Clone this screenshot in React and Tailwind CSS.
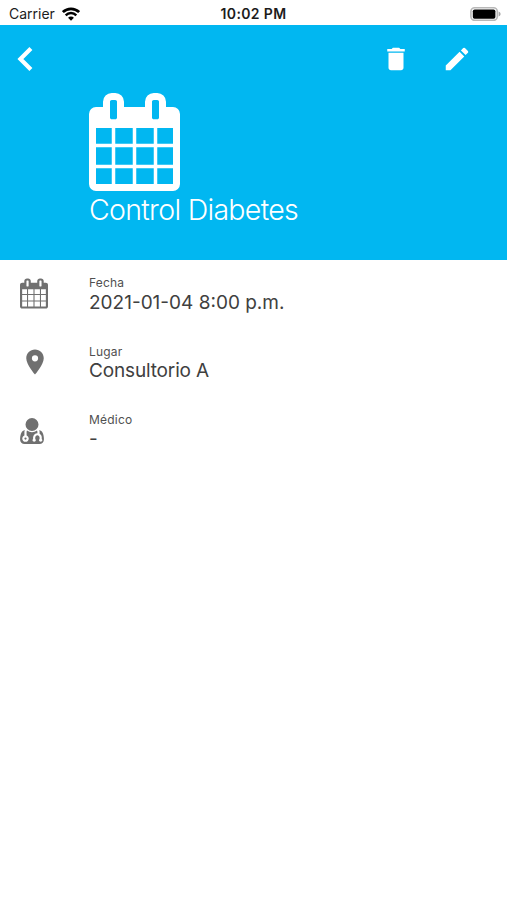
import React from "react";
import { MdDelete, MdEdit, MdPlace } from "react-icons/md";

const WifiIcon = () => (
    <svg viewBox="0 0 18 14" className="w-[18px] h-[14px]" fill="none" stroke="#000">
        <path d="M0.9 5.1a11.6 11.6 0 0 1 16.2 0" strokeWidth="2.7" />
        <path d="M3.700 8.300a7.4 7.4 0 0 1 10.600 0" strokeWidth="2.4" />
        <path d="M9 13.700L6.100 10.800a4 4 0 0 1 5.800 0z" fill="#000" stroke="none" />
    </svg>
);

const BatteryIcon = () => (
    <svg viewBox="0 0 31 14" className="w-[31px] h-[14px]">
        <rect x="0.9" y="0.8" width="26.4" height="12.6" rx="3.8" fill="#fff" stroke="#b8b8b8" strokeWidth="1.6" />
        <rect x="2.8" y="2.4" width="22.6" height="9.4" rx="1.8" fill="#000" />
        <path d="M28.6 4.6c1.3.4 2 1.4 2 2.5s-.7 2.1-2 2.5z" fill="#a8a8a8" />
    </svg>
);

const CalendarIcon = ({ className }) => (
    <svg viewBox="0 0 1664 1792" className={className} fill="currentColor">
        <path
            fillRule="evenodd"
            d="M128 1664h288v-288h-288zM480 1664h320v-288h-320zM864 1664h320v-288h-320zM1248 1664h288v-288h-288zM128 1312h288v-320h-288zM480 1312h320v-320h-320zM864 1312h320v-320h-320zM1248 1312h288v-320h-288zM128 928h288v-288h-288zM480 928h320v-288h-320zM864 928h320v-288h-320zM1248 928h288v-288h-288zM512 448v-288q0-13-9.500-22.500t-22.500-9.500h-64q-13 0-22.500 9.500t-9.500 22.500v288q0 13 9.500 22.500t22.500 9.500h64q13 0 22.500-9.500t9.500-22.500zM1280 448v-288q0-13-9.500-22.500t-22.500-9.500h-64q-13 0-22.500 9.500t-9.500 22.500v288q0 13 9.500 22.500t22.500 9.500h64q13 0 22.500-9.500t9.500-22.500zM1664 384v1280q0 52-38 90t-90 38h-1408q-52 0-90-38t-38-90v-1280q0-52 38-90t90-38h128v-96q0-66 47-113t113-47h64q66 0 113 47t47 113v96h384v-96q0-66 47-113t113-47h64q66 0 113 47t47 113v96h128q52 0 90 38t38 90z"
        />
    </svg>
);

const DoctorIcon = ({ className }) => (
    <svg viewBox="0 0 1408 1536" className={className} fill="currentColor">
        <g transform="translate(0 1408) scale(1 -1)">
            <path d="M384 192q0 -26 -19 -45t-45 -19t-45 19t-19 45t19 45t45 19t45 -19t19 -45zM1408 131q0 -121 -73 -190t-194 -69h-874q-121 0 -194 69t-73 190q0 68 5.500 131t24 138t47.500 132.500t81 103t120 60.500q-22 -52 -22 -120v-203q-58 -20 -93 -70t-35 -111q0 -80 56 -136t136 -56t136 56t56 136q0 61 -35.500 111t-92.500 70v203q0 62 25 93q132 -104 295 -104t295 104q25 -31 25 -93v-64q-106 0 -181 -75t-75 -181v-89q-32 -29 -32 -71q0 -40 28 -68t68 -28t68 28t28 68q0 42 -32 71v89q0 52 38 90t90 38t90 -38t38 -90v-89q-32 -29 -32 -71q0 -40 28 -68t68 -28t68 28t28 68q0 42 -32 71v89q0 68 -34.500 127.500t-93.500 93.500q0 10 0.500 42.500t0 48t-2.500 41.500t-7 47t-13 40q68 -15 120 -60.500t81 -103t47.500 -132.500t24 -138t5.500 -131zM1088 1024q0 -159 -112.500 -271.500t-271.500 -112.500t-271.500 112.500t-112.500 271.500t112.500 271.500t271.500 112.500t271.500 -112.500t112.500 -271.500z" />
        </g>
    </svg>
);

const DetailRow = ({ icon, label, value, valueClass = "" }) => (
    <div className="flex h-[68.5px]">
        <div className="w-[89px] shrink-0 pl-5 pt-[3px]">{icon}</div>
        <div>
            <div className="text-[12px] leading-[15px] tracking-[0.2px] text-[#505050]">{label}</div>
            <div className={`text-[19px] leading-[23px] text-[#404040] whitespace-nowrap ${valueClass}`}>{value}</div>
        </div>
    </div>
);

const App = () => {
    return (
        <div className="w-[507px] h-[900px] bg-white overflow-hidden font-['Inter','Liberation_Sans',sans-serif]">

            {/* STATUS BAR */}
            <div className="grid grid-cols-3 items-center h-[25px] pt-[2px] text-[14px] text-[#1c1c1c]">
                <div className="flex items-center gap-[6px] pl-[9px]">
                    <span className="w-[47px]">Carrier</span>
                    <WifiIcon />
                </div>
                <span className="text-center font-semibold tracking-[0.35px]">10:02 PM</span>
                <div className="flex justify-end pr-[6px]">
                    <BatteryIcon />
                </div>
            </div>

            {/* HEADER */}
            <header className="h-[235px] bg-[#01b7f1] text-white">
                <div className="flex items-center h-[68px] pl-[17px] pr-[35px]">
                    <button type="button" aria-label="Volver">
                        <svg viewBox="0 0 17 26" className="w-[17px] h-[26px]" fill="none" stroke="currentColor" strokeWidth="4.2">
                            <path d="M13.900 2.400L3.400 13L13.900 23.600" />
                        </svg>
                    </button>
                    <button type="button" aria-label="Eliminar" className="ml-auto">
                        <MdDelete className="size-[30px]" />
                    </button>
                    <button type="button" aria-label="Editar" className="ml-[31px]">
                        <MdEdit className="size-[30px]" />
                    </button>
                </div>
                <div className="pl-[89px]">
                    <CalendarIcon className="w-[91px] h-[98px]" />
                    <h1 className="text-[28.5px] leading-[38px] font-[330] tracking-[-0.7px] whitespace-nowrap">Control Diabetes</h1>
                </div>
            </header>

            {/* DETAILS */}
            <main className="pt-[15px]">
                <DetailRow
                    icon={<CalendarIcon className="w-[28px] h-[31px] text-[#707070]" />}
                    label="Fecha"
                    value="2021-01-04 8:00 p.m."
                    valueClass="pt-px"
                />
                <DetailRow
                    icon={<MdPlace className="size-[30px] text-[#707070]" />}
                    label="Lugar"
                    value="Consultorio A"
                    valueClass="tracking-[-0.15px]"
                />
                <DetailRow
                    icon={<DoctorIcon className="w-[24px] h-[26px] mt-[3px] text-[#707070]" />}
                    label="Médico"
                    value="-"
                />
            </main>
        </div>
    );
};

export default App;
